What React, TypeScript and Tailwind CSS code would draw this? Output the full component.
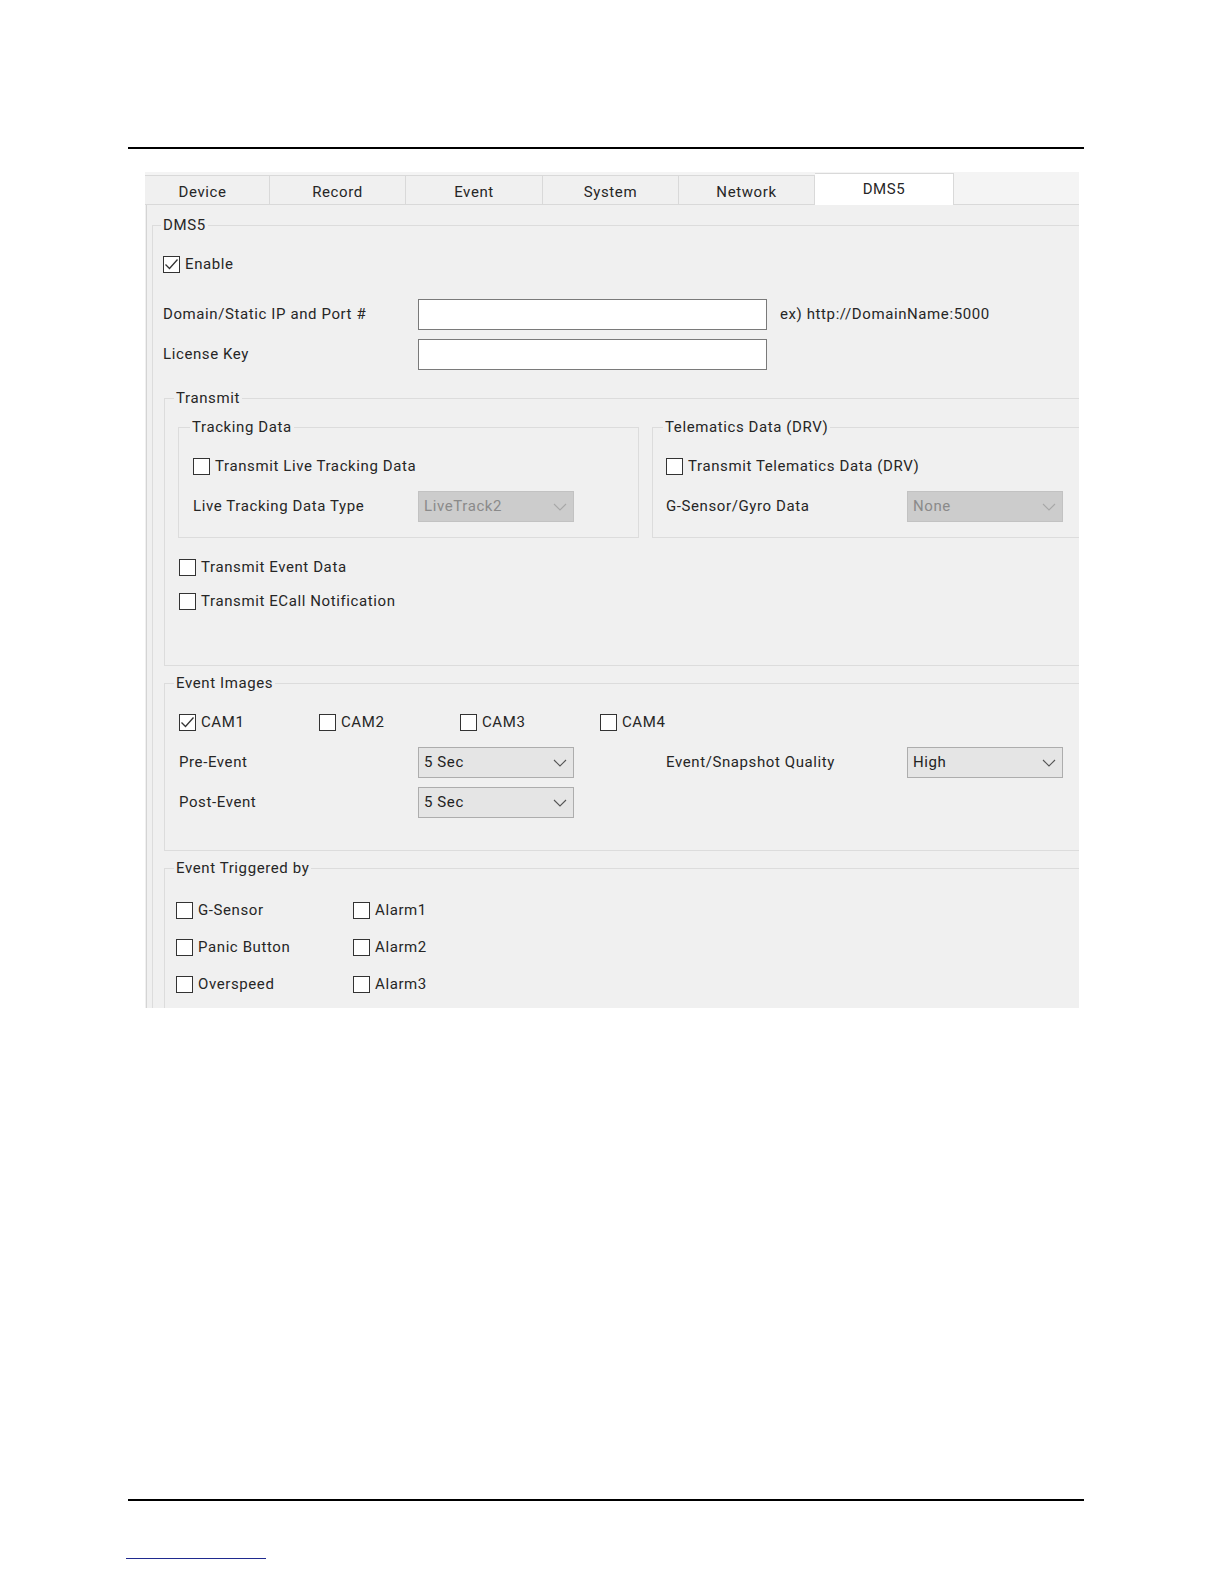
import React from "react";

const Check = ({ checked }: { checked?: boolean }) => (
  <span className="w-[17px] h-[17px] border border-[#333333] bg-white flex items-center justify-center shrink-0">
    {checked && (
      <svg width="15" height="13" viewBox="0 0 15 13">
        <path d="M1.5 6.5 L5.5 10.5 L13.5 1.5" fill="none" stroke="#333333" strokeWidth="1.3" />
      </svg>
    )}
  </span>
);

const CheckRow = ({ label, checked, className = "" }: { label: string; checked?: boolean; className?: string }) => (
  <div className={"flex items-center gap-[5px] h-[20px] " + className}>
    <Check checked={checked} />
    <span>{label}</span>
  </div>
);

const Select = ({ value, disabled }: { value: string; disabled?: boolean }) => (
  <div
    className={
      "w-[156px] h-[31px] border flex items-center justify-between pl-[5px] pr-[6px] shrink-0 " +
      (disabled ? "bg-[#cccccc] border-[#c2c2c2] text-[#8a8a8a]" : "bg-[#e5e5e5] border-[#adadad] text-[#222222]")
    }
  >
    <span>{value}</span>
    <svg width="14" height="8" viewBox="0 0 14 8">
      <path d="M1 1 L7 7 L13 1" fill="none" stroke={disabled ? "#a8a8a8" : "#555555"} strokeWidth="1.1" />
    </svg>
  </div>
);

const Group = ({
  label,
  labelClass,
  className,
  children,
}: {
  label: string;
  labelClass: string;
  className: string;
  children: React.ReactNode;
}) => (
  <fieldset className={"border border-[#dcdcdc] " + className}>
    <legend className={"px-[2px] h-[18px] leading-[18px] " + labelClass}>{label}</legend>
    {children}
  </fieldset>
);

const tabs = [
  { name: "Device", w: "w-[125px] pr-[9px]" },
  { name: "Record", w: "w-[136px]" },
  { name: "Event", w: "w-[137px]" },
  { name: "System", w: "w-[136px]" },
  { name: "Network", w: "w-[136px]" },
];

export default function App() {
  return (
    <div className="w-[1224px] h-[1584px] bg-white overflow-hidden font-['Roboto',sans-serif] text-[15px] tracking-[0.6px] text-[#262626]">
      <div className="h-[147px]" />
      <div className="ml-[128px] w-[956px] h-[2px] bg-black" />

      {/* screenshot */}
      <div className="mt-[23px] ml-[145px] w-[934px] h-[836px] overflow-hidden bg-[#f0f0f0]">
        <div className="flex items-end h-[33px] border-b border-[#d9d9d9] bg-[#f4f4f4]">
          {tabs.map((t) => (
            <div
              key={t.name}
              className={t.w + " h-[29px] border-t border-r border-[#d9d9d9] bg-[#f0f0f0] flex items-center justify-center pt-[4px]"}
            >
              {t.name}
            </div>
          ))}
          <div className="w-[139px] h-[32px] -mb-px border-t border-r border-[#d9d9d9] bg-white flex items-center justify-center">
            DMS5
          </div>
        </div>

        <div className="ml-[1px] border-l border-[#d4d4d4] h-[803px] pt-[11px]">
          <Group label="DMS5" labelClass="ml-[8px]" className="ml-[5px] w-[940px] h-[900px]">
            <CheckRow label="Enable" checked className="mt-[20px] ml-[10px]" />

            <div className="flex items-center mt-[25px] ml-[10px]">
              <span className="w-[255px]">Domain/Static IP and Port #</span>
              <div className="w-[349px] h-[31px] bg-white border border-[#7a7a7a]" />
              <span className="ml-[13px]">ex) http://DomainName:5000</span>
            </div>
            <div className="flex items-center mt-[9px] ml-[10px]">
              <span className="w-[255px]">License Key</span>
              <div className="w-[349px] h-[31px] bg-white border border-[#7a7a7a]" />
            </div>

            <Group label="Transmit" labelClass="ml-[9px]" className="mt-[19px] ml-[11px] w-[930px] pb-[54px]">
              <div className="flex mt-[11px]">
                <Group label="Tracking Data" labelClass="ml-[11px]" className="ml-[13px] w-[461px] pb-[15px]">
                  <CheckRow label="Transmit Live Tracking Data" className="mt-[20px] ml-[14px]" />
                  <div className="flex items-center mt-[15px] ml-[14px]">
                    <span className="w-[225px]">Live Tracking Data Type</span>
                    <Select value="LiveTrack2" disabled />
                  </div>
                </Group>
                <Group label="Telematics Data (DRV)" labelClass="ml-[10px]" className="ml-[13px] w-[500px] pb-[15px]">
                  <CheckRow label="Transmit Telematics Data (DRV)" className="mt-[20px] ml-[13px]" />
                  <div className="flex items-center mt-[15px] ml-[13px]">
                    <span className="w-[241px]">G-Sensor/Gyro Data</span>
                    <Select value="None" disabled />
                  </div>
                </Group>
              </div>
              <CheckRow label="Transmit Event Data" className="mt-[19px] ml-[14px]" />
              <CheckRow label="Transmit ECall Notification" className="mt-[14px] ml-[14px]" />
            </Group>

            <Group label="Event Images" labelClass="ml-[9px]" className="mt-[8px] ml-[11px] w-[930px] pb-[32px]">
              <div className="flex mt-[20px] ml-[14px]">
                <CheckRow label="CAM1" checked className="w-[140px]" />
                <CheckRow label="CAM2" className="w-[141px]" />
                <CheckRow label="CAM3" className="w-[140px]" />
                <CheckRow label="CAM4" className="w-[140px]" />
              </div>
              <div className="flex items-center mt-[15px] ml-[14px]">
                <span className="w-[239px]">Pre-Event</span>
                <Select value="5 Sec" />
                <span className="ml-[92px] w-[241px]">Event/Snapshot Quality</span>
                <Select value="High" />
              </div>
              <div className="flex items-center mt-[9px] ml-[14px]">
                <span className="w-[239px]">Post-Event</span>
                <Select value="5 Sec" />
              </div>
            </Group>

            <Group label="Event Triggered by" labelClass="ml-[9px]" className="mt-[8px] ml-[11px] w-[930px] h-[300px]">
              <div className="ml-[11px] mt-[23px] flex flex-col gap-[17px]">
                <div className="flex">
                  <CheckRow label="G-Sensor" className="w-[177px]" />
                  <CheckRow label="Alarm1" />
                </div>
                <div className="flex">
                  <CheckRow label="Panic Button" className="w-[177px]" />
                  <CheckRow label="Alarm2" />
                </div>
                <div className="flex">
                  <CheckRow label="Overspeed" className="w-[177px]" />
                  <CheckRow label="Alarm3" />
                </div>
              </div>
            </Group>
          </Group>
        </div>
      </div>

      <div className="mt-[491px] ml-[128px] w-[956px] h-[2px] bg-black" />
      <div className="mt-[57px] ml-[126px] w-[140px] h-[1px] bg-[#1f2a8f]" />
    </div>
  );
}
